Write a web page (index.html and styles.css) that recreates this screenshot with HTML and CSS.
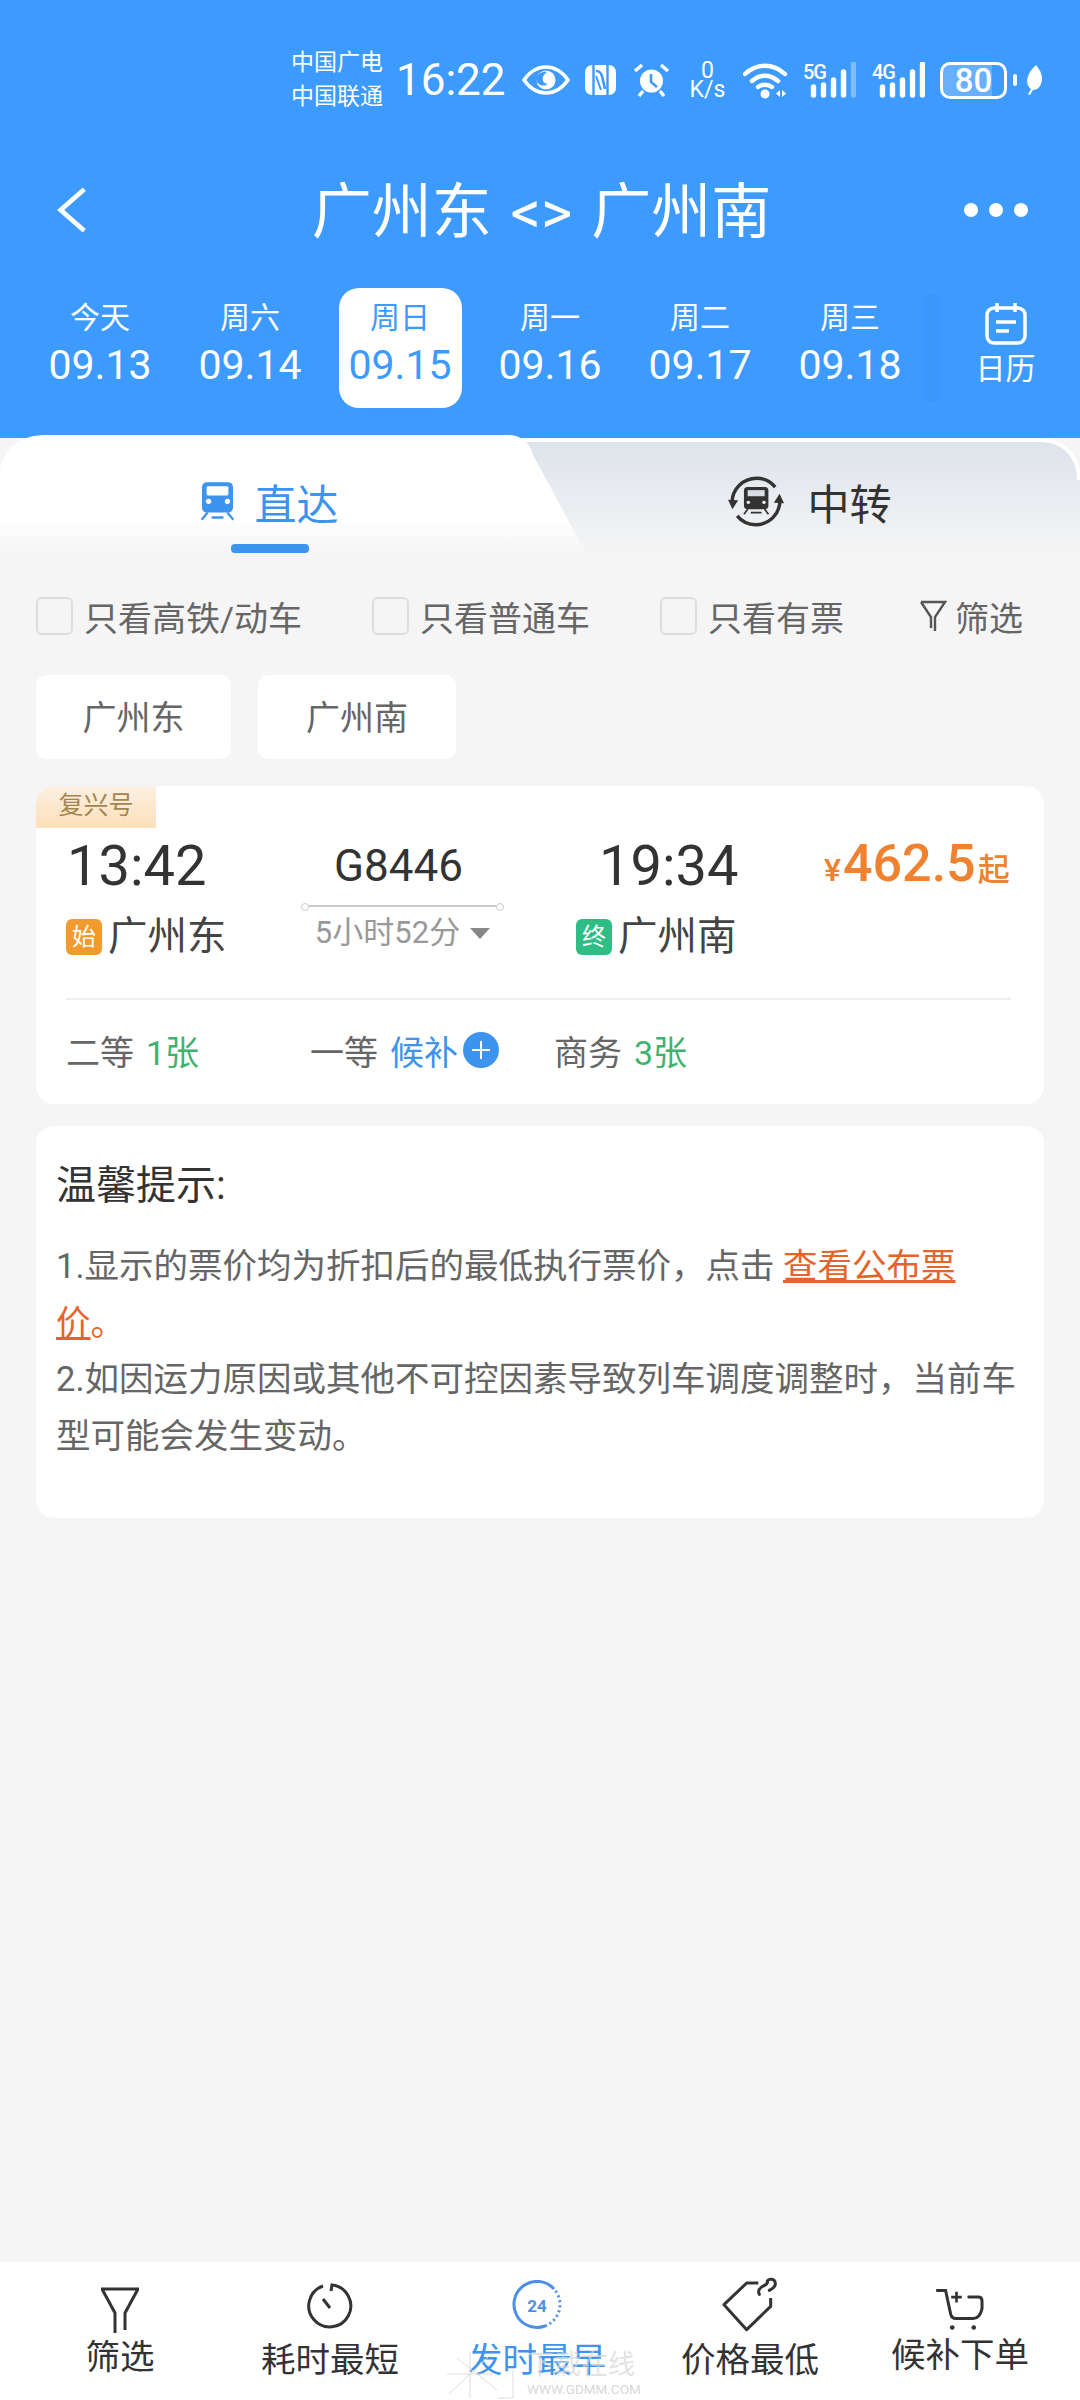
FILE: index.html
```html
<!DOCTYPE html>
<html lang="zh-CN">
<head>
  <meta charset="UTF-8">
  <meta name="viewport" content="width=device-width, initial-scale=1.0">
  <title>广州东 - 广州南</title>
  <link rel="stylesheet" href="styles.css">
</head>
<body>
<div class="page">
  <header class="top">
    <div class="status">
      <div class="carrier"><span>中国广电</span><span>中国联通</span></div>
      <span class="clock">16:22</span>
      <svg class="st-eye" viewBox="0 0 48 30"><path d="M2 15C9 5 16 2 24 2s15 3 22 13c-7 10-14 13-22 13S9 25 2 15Z" fill="none" stroke="#fff" stroke-width="3.6"/><circle cx="24" cy="15" r="9.5" fill="#fff"/><path d="M14 13c2-5 7-7 11-6-3 2-5 5-4 9 1 2 3 3 5 3-3 2-7 2-9 0-2-1-3-4-3-6Z" fill="#3d9aff"/></svg>
      <svg class="st-nfc" viewBox="0 0 33 32"><rect x="1" y="1" width="31" height="30" rx="7" fill="#fff"/><path d="M9.500 1v30M23.500 1v30" stroke="#3d9aff" stroke-width="2.400"/><path d="M12 7c4 0 5 2 6 5l3 13" fill="none" stroke="#3d9aff" stroke-width="2.600"/><path d="M12 12l5 14" fill="none" stroke="#3d9aff" stroke-width="2"/></svg>
      <svg class="st-alarm" viewBox="0 0 37 34"><circle cx="18.500" cy="18" r="11.500" fill="#fff"/><path d="M18 11v8l6 5" fill="none" stroke="#3d9aff" stroke-width="2.600"/><path d="M2 8l7-6M35 8l-7-6M6 33l4-5M31 33l-4-5" stroke="#fff" stroke-width="3.400"/></svg>
      <div class="speed"><span>0</span><span>K/s</span></div>
      <svg class="st-wifi" viewBox="0 0 46 37"><path d="M2 12c12-11 28-11 40 0M9 19c8-7 18-7 26 0M15 25c4-3 10-3 14 0" fill="none" stroke="#fff" stroke-width="4.400" stroke-linecap="round"/><circle cx="22" cy="32" r="4.500" fill="#fff"/><path d="M37 28v7l-4-3.500ZM39 28v7l4-3.500Z" fill="#fff"/></svg>
      <div class="signal">
        <span class="gen">5G</span>
        <svg viewBox="0 0 53 36"><path d="M10.500 25v8M20.500 23v10M30.500 18v15M40.500 10v23" stroke="#fff" stroke-width="5.400" stroke-linecap="round"/><path d="M50.500 2v31" stroke="#fff" stroke-opacity=".35" stroke-width="5.400" stroke-linecap="round"/></svg>
      </div>
      <div class="signal s4">
        <span class="gen">4G</span>
        <svg viewBox="0 0 53 36"><path d="M10.500 25v8M20.500 23v10M30.500 18v15M40.500 10v23M50.500 2v31" stroke="#fff" stroke-width="5.400" stroke-linecap="round"/></svg>
      </div>
      <div class="battery"><span>80</span></div>
      <span class="nub"></span>
      <svg class="st-leaf" viewBox="0 0 20 30"><path d="M13 0c6 7 8 14 4 21-2 3-5 4-7 4l-3 5-2-1 3-5C1 19 4 8 13 0Z" fill="#fff"/></svg>
    </div>

    <nav class="nav">
      <svg class="back" viewBox="0 0 36 50"><path d="M31 3 6 25l25 22" fill="none" stroke="#fff" stroke-width="5"/></svg>
      <h1 class="title">广州东 &lt;&gt; 广州南</h1>
      <div class="more"><i></i><i></i><i></i></div>
    </nav>

    <div class="dates">
      <div class="day"><span class="wk">今天</span><span class="dt">09.13</span></div>
      <div class="day"><span class="wk">周六</span><span class="dt">09.14</span></div>
      <div class="day on"><span class="wk">周日</span><span class="dt">09.15</span></div>
      <div class="day"><span class="wk">周一</span><span class="dt">09.16</span></div>
      <div class="day"><span class="wk">周二</span><span class="dt">09.17</span></div>
      <div class="day"><span class="wk">周三</span><span class="dt">09.18</span></div>
      <div class="cal">
        <svg viewBox="0 0 44 44"><rect x="3" y="6" width="38" height="35" rx="7" fill="none" stroke="#fff" stroke-width="3.500"/><path d="M13 1v9M31 1v9M12 20h20M12 29h13" stroke="#fff" stroke-width="3.500"/></svg>
        <span>日历</span>
      </div>
    </div>
  </header>

  <div class="tabs">
    <svg class="tabs-bg" viewBox="0 0 1080 135" preserveAspectRatio="none">
      <defs>
        <linearGradient id="gOff" x1="0" y1="0" x2="0" y2="1"><stop offset="0" stop-color="#dde3eb"/><stop offset="1" stop-color="#f5f5f5"/></linearGradient>
        <linearGradient id="gOn" x1="0" y1="0" x2="0" y2="1"><stop offset=".68" stop-color="#fff"/><stop offset="1" stop-color="#f5f5f5"/></linearGradient>
      </defs>
      <path d="M500 18H1040c24 0 40 16 40 40v77H500Z" fill="url(#gOff)"/>
      <path d="M500 20H1040c24 0 39 16 39 40" fill="none" stroke="#fff" stroke-width="4"/>
      <path d="M0 135V55C0 30 20 15 45 15H508c14 0 22 8 25 20L587 135Z" fill="url(#gOn)"/>
    </svg>
    <div class="tab active">
      <svg class="ic-train" viewBox="0 0 100 117"><path d="M18 0h64c9 0 15 6 15 15v62c0 9-6 15-15 15H18C9 92 3 86 3 77V15C3 6 9 0 18 0Z" fill="#3d94ee"/><rect x="17" y="12" width="66" height="28" rx="4" fill="#fff"/><circle cx="23" cy="58" r="8" fill="#fff"/><circle cx="80" cy="58" r="8" fill="#fff"/><path d="M20 92 2 114M80 92l18 22M32 107h36" stroke="#3d94ee" stroke-width="7" fill="none"/></svg>
      <span>直达</span>
      <i class="bar"></i>
    </div>
    <div class="tab">
      <svg class="ic-transfer" viewBox="0 0 165 155"><path d="M12 85C10 40 45 9 85 9c22 0 40 9 54 26M153 70c2 45-33 76-72 76-22 0-40-9-54-26" fill="none" stroke="#333" stroke-width="10"/><path d="M0 72 13 100 30 74ZM165 83l-13-28-17 26Z" fill="#333"/><path d="M57 35h52c6 0 10 4 10 10v46c0 5-4 9-9 9H56c-5 0-9-4-9-9V45c0-6 4-10 10-10Z" fill="#333"/><rect x="58" y="44" width="50" height="18" fill="#d9dee4"/><circle cx="60" cy="80" r="5" fill="#fff"/><circle cx="106" cy="80" r="5" fill="#fff"/><path d="M58 100 47 115M108 100l11 15M67 110h32" stroke="#333" stroke-width="5" fill="none"/></svg>
      <span>中转</span>
    </div>
  </div>

  <main class="main">
    <div class="filters">
      <label class="check ck1"><i class="box"></i>只看高铁/动车</label>
      <label class="check ck2"><i class="box"></i>只看普通车</label>
      <label class="check ck3"><i class="box"></i>只看有票</label>
      <div class="check-filter">
        <svg viewBox="0 0 28 32"><path d="M2 2h24L16 17v14M2 2l10 15v11" fill="none" stroke="#555" stroke-width="2.400"/></svg>
        筛选
      </div>
    </div>

    <div class="chips">
      <span class="chip">广州东</span>
      <span class="chip c2">广州南</span>
    </div>

    <section class="card train">
      <span class="ribbon">复兴号</span>
      <div class="route">
        <div class="stop s-from">
          <div class="time">13:42</div>
          <div class="place"><i class="mark orange">始</i>广州东</div>
        </div>
        <div class="mid">
          <div class="no">G8446</div>
          <div class="line"></div>
          <div class="dur">5小时52分<i class="tri"></i></div>
        </div>
        <div class="stop s-to">
          <div class="time">19:34</div>
          <div class="place"><i class="mark green">终</i>广州南</div>
        </div>
        <div class="price"><small>¥</small>462.5<small class="qi">起</small></div>
      </div>
      <div class="seats">
        <div class="seat s1">二等<b class="ok">1张</b></div>
        <div class="seat s2">一等<b class="wait">候补</b><i class="plus"></i></div>
        <div class="seat s3">商务<b class="ok">3张</b></div>
      </div>
    </section>

    <section class="card tips">
      <h2>温馨提示:</h2>
      <p>1.显示的票价均为折扣后的最低执行票价，点击 <a class="tip-link">查看公布票价</a><span class="tip-end">。</span><br>2.如因运力原因或其他不可控因素导致列车调度调整时，当前车型可能会发生变动。</p>
    </section>
  </main>

  <footer class="bottom">
    <div class="item it-filter">
      <svg viewBox="0 0 42 46"><path d="M2 2h38M3 2l13 24v20M39 2 26 26v17" fill="none" stroke="#333" stroke-width="3"/></svg>
      <span>筛选</span>
    </div>
    <div class="item it-time">
      <svg viewBox="0 0 48 48"><path d="M17 4a21 21 0 1 0 9-1l-1 6" fill="none" stroke="#333" stroke-width="3"/><path d="m17 17 7 9" stroke="#333" stroke-width="3"/></svg>
      <span>耗时最短</span>
    </div>
    <div class="item it-early">
      <svg viewBox="0 0 50 50"><path d="M42 9A23 23 0 1 0 33 46" fill="none" stroke="#4c8fe6" stroke-width="3"/><path d="M33 46A23 23 0 0 0 42 9" fill="none" stroke="#4c8fe6" stroke-width="3" stroke-dasharray="2 3"/><text x="25" y="32" text-anchor="middle" class="num24">24</text></svg>
      <span>发时最早</span>
    </div>
    <div class="item it-price">
      <svg viewBox="60 10 180 180"><path d="M175 40H140L72 105l68 75 72-70V85" fill="none" stroke="#333" stroke-width="9" stroke-linejoin="round"/><path d="M178 74c-6-12 2-20 14-26 8-4 12-8 10-14 4-8 22-8 24 6 2 12-10 18-18 22" fill="none" stroke="#333" stroke-width="9" stroke-linecap="round"/></svg>
      <span>价格最低</span>
    </div>
    <div class="item it-cart">
      <svg viewBox="700 50 160 135"><path d="M710 60h25l15 70c2 10 6 15 16 15h52c14 0 22-8 27-30V92c0-8-4-12-12-12h-28" fill="none" stroke="#333" stroke-width="9" stroke-linecap="round"/><path d="M768 64v32M752 80h32" stroke="#333" stroke-width="8"/><circle cx="755" cy="172" r="7" fill="#333"/><circle cx="820" cy="172" r="7" fill="#333"/></svg>
      <span>候补下单</span>
    </div>
    <div class="mark-wm">
      <svg viewBox="0 0 75 50"><path d="M27 2v46M4 24h46M6 44 46 6M14 8l40 32M70 18v30H55" fill="none" stroke="#ddd" stroke-width="1"/></svg>
      <div class="wm-text"><span class="wm-cn">下载在线</span><span class="wm-en">WWW.GDMM.COM</span></div>
    </div>
  </footer>
</div>
</body>
</html>
```

FILE: styles.css
```css
* {
  box-sizing: border-box;
}

body {
  margin: 0;
  font-family: Roboto, "Noto Sans CJK SC", sans-serif;
  background: #f5f5f5;
  color: #333;
}

i {
  font-style: normal;
}

.page {
  width: 1080px;
  height: 2400px;
  display: flex;
  flex-direction: column;
  overflow: hidden;
}

/* blue header */
.top {
  background: #3d9aff;
  color: #fff;
  height: 420px;
  flex: none;
}

.status {
  height: 120px;
  padding: 40px 0 0 291px;
  display: flex;
  align-items: center;
}

.carrier {
  display: flex;
  flex-direction: column;
  font-size: 23px;
  line-height: 34px;
  width: 105px;
  flex: none;
}

.clock {
  font-size: 44px;
  width: 126px;
  flex: none;
}

.st-eye { width: 48px; height: 30px; margin-right: 14px; }
.st-nfc { width: 33px; height: 32px; margin-right: 16px; }
.st-alarm { width: 37px; height: 34px; margin-right: 20px; }

.speed {
  width: 35px;
  margin-right: 18px;
  display: flex;
  flex-direction: column;
  align-items: center;
  font-size: 23px;
  line-height: 19px;
}

.st-wifi { width: 46px; height: 37px; margin-right: 14px; }

.signal {
  width: 53px;
  height: 36px;
  margin-right: 16px;
  position: relative;
}

.signal.s4 { margin-right: 15px; }

.signal svg {
  display: block;
  width: 53px;
  height: 36px;
}

.gen {
  position: absolute;
  left: 0;
  top: 0;
  font-size: 20px;
  font-weight: 500;
  line-height: 20px;
  letter-spacing: -1px;
}

.battery {
  width: 67px;
  height: 37px;
  border: 3px solid #fff;
  border-radius: 10px;
  background: linear-gradient(90deg, rgba(255, 255, 255, .22) 80%, transparent 80%);
  font-size: 33px;
  font-weight: 500;
  line-height: 31px;
  text-align: center;
}

.nub {
  width: 4px;
  height: 12px;
  margin: 0 6px;
  background: #fff;
  border-radius: 2px;
}

.st-leaf { width: 20px; height: 30px; }

.nav {
  height: 76px;
  margin-top: 43px;
  padding: 0 52px 0 55px;
  display: grid;
  grid-template-columns: 1fr auto 1fr;
  align-items: center;
}

.back { width: 34px; height: 48px; }

.title {
  margin: 0 0 6px;
  font-size: 60px;
  font-weight: 400;
  word-spacing: 4px;
  white-space: pre;
}

.more {
  display: flex;
  gap: 11px;
  justify-content: flex-end;
}

.more i { width: 14px; height: 14px; background: #fff; border-radius: 50%; }

.dates {
  margin-top: 49px;
  padding: 0 0 0 25px;
  display: flex;
  align-items: flex-start;
}

.day {
  width: 150px;
  height: 120px;
  display: flex;
  flex-direction: column;
  align-items: center;
  padding-top: 8px;
}

.day.on {
  color: #3d9aff;
  position: relative;
  z-index: 0;
}

.day.on::before {
  content: "";
  position: absolute;
  z-index: -1;
  left: 14px;
  right: 13px;
  top: 0;
  bottom: 0;
  background: #fff;
  border-radius: 20px;
}

.wk { font-size: 30px; line-height: 44px; }
.dt { font-size: 41px; line-height: 50px; }

.cal {
  margin-left: 18px;
  width: 125px;
  display: flex;
  flex-direction: column;
  align-items: center;
  gap: 3px;
  padding-top: 14px;
  font-size: 30px;
  line-height: 40px;
  position: relative;
}

.cal::before {
  content: "";
  position: absolute;
  left: -24px;
  top: 6px;
  width: 26px;
  height: 108px;
  background: linear-gradient(90deg, transparent, rgba(50, 130, 225, .2), transparent);
}

.cal svg { width: 44px; height: 44px; }

/* tabs */
.tabs {
  height: 135px;
  flex: none;
  display: flex;
  position: relative;
  background: linear-gradient(#3d9aff 18px, #f5f5f5 18px);
}

.tabs-bg {
  position: absolute;
  left: 0;
  top: 0;
  width: 100%;
  height: 100%;
}

.tab {
  position: relative;
  width: 50%;
  padding-top: 27px;
  display: flex;
  align-items: center;
  justify-content: center;
  gap: 23px;
  font-size: 42px;
}

.tab.active {
  color: #3d94ee;
  gap: 20px;
}

.ic-train { width: 33px; height: 39px; }
.ic-transfer { width: 56px; height: 53px; }

.bar {
  position: absolute;
  left: 231px;
  bottom: 2px;
  width: 78px;
  height: 9px;
  background: #3d94ee;
  border-radius: 4px;
}

/* content */
.main {
  flex: 1;
  padding: 0 36px;
}

.filters {
  height: 62px;
  display: flex;
  align-items: center;
  font-size: 34px;
  color: #666;
  margin-top: 30px;
}

.check {
  display: flex;
  align-items: center;
  gap: 11px;
}

.ck1 { width: 336px; }
.ck2 { width: 288px; }
.ck3 { width: 259px; }

.box {
  width: 37px;
  height: 38px;
  border: 2px solid #ddd;
  border-radius: 6px;
}

.check-filter {
  display: flex;
  align-items: center;
  gap: 8px;
}

.check-filter svg { width: 28px; height: 32px; }

.chips {
  margin-top: 28px;
  display: flex;
  gap: 27px;
}

.chip {
  width: 195px;
  height: 84px;
  padding-bottom: 4px;
  background: #fff;
  border-radius: 10px;
  font-size: 34px;
  color: #666;
  display: flex;
  align-items: center;
  justify-content: center;
}

.chip.c2 { width: 198px; }

.card {
  background: #fff;
  border-radius: 18px;
}

.train {
  margin-top: 27px;
  height: 318px;
  position: relative;
  overflow: hidden;
}

.ribbon {
  position: absolute;
  left: 0;
  top: 0;
  width: 120px;
  height: 42px;
  background: linear-gradient(#fbf0e2, #fddfb9);
  color: #a5854f;
  font-size: 25px;
  text-align: center;
  line-height: 40px;
}

.route {
  display: flex;
  padding: 44px 0 0 30px;
  height: 212px;
}

.s-from { width: 236px; }
.s-to { width: 248px; }
.s-to .time { padding-left: 23px; }

.time {
  font-size: 56px;
  line-height: 72px;
  color: #333;
  padding-left: 1px;
}

.place {
  margin-top: 10px;
  font-size: 39.5px;
  line-height: 50px;
  color: #444;
  display: flex;
  align-items: center;
  gap: 6px;
}

.mark {
  width: 36px;
  height: 36px;
  border-radius: 6px;
  color: #fff;
  font-size: 24px;
  line-height: 36px;
  text-align: center;
}

.orange { background: #f39a2c; }
.green { background: #2dbd85; }

.mid {
  width: 201px;
  margin-right: 73px;
  display: flex;
  flex-direction: column;
  align-items: center;
}

.no {
  font-size: 44px;
  line-height: 72px;
  color: #333;
  margin-right: 8px;
}

.line {
  width: 201px;
  height: 2px;
  margin-top: 3px;
  flex: none;
  background: #ccc;
  position: relative;
}

.line::before,
.line::after {
  content: "";
  position: absolute;
  top: -2px;
  width: 6px;
  height: 6px;
  background: #fff;
  border: 1px solid #ccc;
  border-radius: 50%;
}

.line::before { left: -1px; }
.line::after { right: -1px; }

.dur {
  margin-top: 6px;
  font-size: 31px;
  line-height: 40px;
  color: #999;
  display: flex;
  align-items: center;
  gap: 10px;
  white-space: nowrap;
}

.tri {
  width: 0;
  height: 0;
  border-left: 10px solid transparent;
  border-right: 10px solid transparent;
  border-top: 11px solid #888;
}

.price {
  margin-top: -2px;
  font-size: 52px;
  line-height: 72px;
  color: #ee8230;
  font-weight: 500;
  white-space: nowrap;
}

.price small { font-size: 32px; margin-right: 2px; }
.price .qi { margin: 0 0 0 2px; }

.seats {
  margin: 0 33px 0 30px;
  height: 102px;
  border-top: 2px solid #eee;
  display: flex;
  align-items: center;
  font-size: 34px;
  color: #666;
}

.seat {
  display: flex;
  align-items: center;
  white-space: pre;
}

.seat b { font-weight: 400; margin-left: 12px; }
.s1 { width: 244px; padding-left: 0; }
.s2 { width: 244px; }
.ok { color: #3fb36d; }
.wait { color: #3d94e8; }

.plus {
  width: 36px;
  height: 36px;
  margin-left: 5px;
  border-radius: 50%;
  background: #3d94ee;
  position: relative;
}

.plus::before,
.plus::after {
  content: "";
  position: absolute;
  background: #fff;
  left: 9px;
  right: 9px;
  top: 17px;
  height: 2px;
}

.plus::after {
  left: 17px;
  right: 17px;
  top: 9px;
  height: 18px;
  width: 2px;
}

.tips {
  margin-top: 22px;
  height: 392px;
  padding: 30px 22px 0 20px;
}

.tips h2 {
  margin: 0;
  font-size: 40px;
  font-weight: 400;
  line-height: 60px;
  color: #333;
}

.tips p {
  margin: 22px 0 0;
  font-size: 34.5px;
  line-height: 56.5px;
  color: #666;
}

.tip-link {
  color: #e5642a;
  text-decoration: underline;
}

.tip-end { color: #e5642a; }

/* bottom bar */
.bottom {
  height: 138px;
  flex: none;
  background: #fff;
  display: flex;
  position: relative;
  color: #333;
  font-size: 34.5px;
}

.item {
  display: flex;
  flex-direction: column;
  align-items: center;
  position: relative;
}

.item svg { position: absolute; }
.item span { position: absolute; white-space: nowrap; line-height: 44px; }

.it-filter { width: 240px; }
.it-time { width: 180px; }
.it-early { width: 234px; }
.it-price { width: 192px; }
.it-cart { width: 228px; }

.it-filter svg { width: 42px; height: 46px; top: 25px; }
.it-filter span { top: 73px; }
.it-time svg { width: 48px; height: 48px; top: 20px; }
.it-time span { top: 76px; }
.it-early svg { width: 50px; height: 50px; top: 18px; }
.it-early span { top: 76px; color: #3d94ee; }
.it-price svg { width: 60px; height: 60px; top: 11px; }
.it-price span { top: 76px; }
.it-cart svg { width: 53px; height: 45px; top: 25px; }
.it-cart span { top: 71px; }

.num24 {
  font-size: 17px;
  font-weight: 700;
  fill: #4c8fe6;
}

.mark-wm {
  position: absolute;
  left: 443px;
  top: 88px;
  display: flex;
  gap: 9px;
  color: #d8d8d8;
}

.mark-wm svg { width: 75px; height: 50px; }

.wm-text {
  display: flex;
  flex-direction: column;
  width: 114px;
}

.wm-cn { font-size: 27px; line-height: 30px; opacity: .7; }
.wm-en { font-size: 13.5px; line-height: 18px; white-space: nowrap; }
```
